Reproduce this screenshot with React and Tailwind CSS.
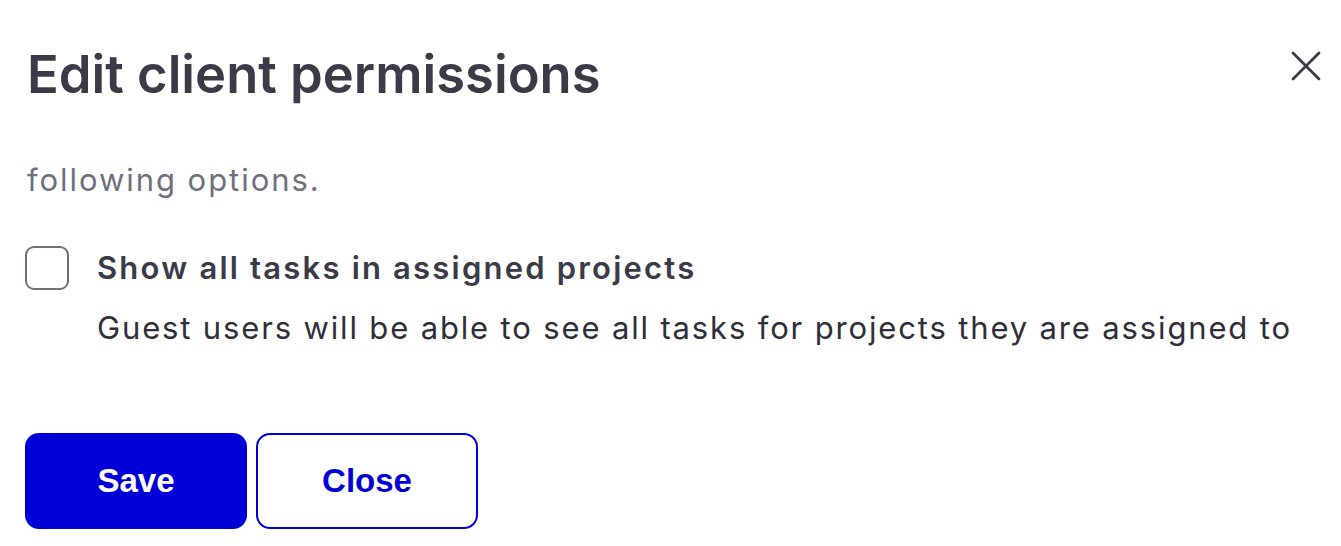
import React from 'react';

export default function App() {
  return (
    <div
      className="w-[1341px] h-[546px] bg-white overflow-hidden relative"
      style={{ fontFamily: 'Inter, "Liberation Sans", sans-serif' }}
    >
      {/* header */}
      <div className="flex items-start justify-between pl-[27px] pr-[20px] pt-[44px]">
        <h1 className="text-[52.5px] leading-[60px] font-semibold text-[#3b3a48]">Edit client permissions</h1>
        <button className="mt-[7px] w-[30px] h-[30px] flex items-center justify-center text-[#3b3a48]">
          <svg width="30" height="30" viewBox="0 0 30 30" fill="none" stroke="currentColor" strokeWidth="2.8" strokeLinecap="round">
            <path d="M2 2 L28 28 M28 2 L2 28" />
          </svg>
        </button>
      </div>

      <p className="pl-[27px] mt-[56px] text-[31px] leading-[40px] tracking-[1.95px] text-[#6f6f80]">following options.</p>

      {/* option */}
      <div className="flex pl-[25px] mt-[46px] gap-[28px]">
        <div className="w-[44px] h-[44px] shrink-0 rounded-[9px] border-2 border-[#6f6f7c] bg-white" />
        <div className="flex flex-col">
          <span className="text-[31px] leading-[44px] font-semibold tracking-[2.2px] text-[#3b3a48]">Show all tasks in assigned projects</span>
          <span className="mt-[18px] text-[31px] leading-[40px] tracking-[1.85px] text-[#2f2e3a]">Guest users will be able to see all tasks for projects they are assigned to</span>
        </div>
      </div>

      {/* actions */}
      <div
        className="flex gap-[9px] pl-[25px] mt-[85px]"
        style={{ fontFamily: '"Liberation Sans", Arial, sans-serif' }}
      >
        <button className="w-[222px] h-[96px] rounded-[14px] bg-[#0000d6] text-white text-[33px] font-bold">Save</button>
        <button className="w-[222px] h-[96px] rounded-[14px] border-2 border-[#0000d6] bg-white text-[#0000d6] text-[33px] font-bold">Close</button>
      </div>
    </div>
  );
}
